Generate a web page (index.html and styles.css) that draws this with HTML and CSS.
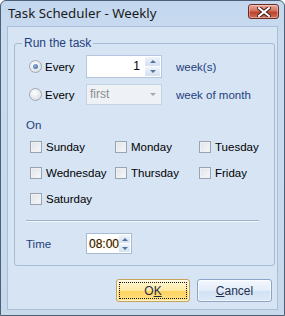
FILE: index.html
```html
<!DOCTYPE html>
<html lang="en">
<head>
  <meta charset="UTF-8">
  <title>Task Scheduler - Weekly</title>
  <link rel="stylesheet" href="styles.css">
</head>
<body>
  <div class="window">
    <!-- TITLE BAR -->
    <div class="titlebar">
      <span class="title">Task Scheduler - Weekly</span>
      <button class="close" type="button">
        <svg width="14" height="10" viewBox="0 0 14 10">
          <path d="M2 1 L12 9 M12 1 L2 9" stroke="#3b1d1a" stroke-width="4" stroke-linecap="square"/>
          <path d="M2 1 L12 9 M12 1 L2 9" stroke="#fff" stroke-width="2" stroke-linecap="square"/>
        </svg>
      </button>
    </div>

    <!-- CLIENT AREA -->
    <div class="client">
      <fieldset class="group">
        <legend>Run the task</legend>

        <div class="task-grid">
          <label class="radio-row"><span class="radio checked"></span>Every</label>
          <div class="spin">
            <span class="spin-value">1</span>
            <span class="spin-btns">
              <span class="spin-btn"><span class="arrow up"></span></span>
              <span class="spin-btn"><span class="arrow down"></span></span>
            </span>
          </div>
          <span class="blue unit">week(s)</span>

          <label class="radio-row"><span class="radio"></span>Every</label>
          <div class="combo disabled">
            <span class="combo-value">first</span>
            <span class="combo-arrow"><span class="arrow down grey"></span></span>
          </div>
          <span class="blue unit">week of month</span>
        </div>

        <div class="blue on-label">On</div>

        <div class="days">
          <label class="check-row"><span class="check"></span>Sunday</label>
          <label class="check-row"><span class="check"></span>Monday</label>
          <label class="check-row"><span class="check"></span>Tuesday</label>
          <label class="check-row"><span class="check"></span>Wednesday</label>
          <label class="check-row"><span class="check"></span>Thursday</label>
          <label class="check-row"><span class="check"></span>Friday</label>
          <label class="check-row"><span class="check"></span>Saturday</label>
        </div>

        <div class="separator"></div>

        <div class="time-row">
          <span class="blue time-label">Time</span>
          <div class="spin time">
            <span class="spin-value time-value">08:00</span>
            <span class="spin-btns">
              <span class="spin-btn"><span class="arrow up"></span></span>
              <span class="spin-btn"><span class="arrow down"></span></span>
            </span>
          </div>
        </div>
      </fieldset>

      <div class="buttons">
        <button class="btn default" type="button"><span class="focus">O<u>K</u></span></button>
        <button class="btn" type="button"><u>C</u>ancel</button>
      </div>
    </div>
  </div>
</body>
</html>
```

FILE: styles.css
```css
* {
  margin: 0;
  padding: 0;
  box-sizing: border-box;
}
body {
  background: #fff;
  font-family: "Liberation Sans", Arial, sans-serif;
  font-size: 11px;
  color: #000;
}

/* OKNO */
.window {
  width: 285px;
  height: 316px;
  display: flex;
  flex-direction: column;
  background: linear-gradient(#c3d7ef, #c9dbef 40px, #c8d9ec);
  border: 1px solid #4d5f75;
  border-radius: 6px 6px 0 0;
  padding: 0 6px 5px 6px;
}

/* PASEK TYTUŁU */
.titlebar {
  height: 25px;
  display: flex;
  align-items: flex-start;
  justify-content: space-between;
}
.title {
  font-family: "Noto Sans", "Liberation Sans", sans-serif;
  font-size: 13.3px;
  line-height: 15px;
  margin: 5px 0 0 1px;
  color: #1b1b1b;
}
.close {
  width: 31px;
  height: 15px;
  margin: 3px -1px 0 0;
  display: flex;
  align-items: center;
  justify-content: center;
  border: 1px solid #6b2a22;
  border-radius: 3px;
  background: linear-gradient(#e9a99c, #d5715f 45%, #c0412b 55%, #d0705c);
  box-shadow: inset 0 0 0 1px rgba(255, 255, 255, 0.35);
}

/* OBSZAR KLIENTA */
.client {
  flex: 1;
  display: flex;
  flex-direction: column;
  background: #d6e4f4;
  border: 1px solid #a9bfd9;
  padding: 0 5px 0 6px;
}

/* GRUPA */
.group {
  margin-top: 9px;
  height: 230px;
  border: 1px solid #a7bbd3;
  border-radius: 3px;
  padding: 0 15px 0 11px;
}
.group legend {
  margin-left: -4px;
  padding: 0 2px;
  font-size: 12px;
  line-height: 15px;
  color: #1f3f7c;
}
.blue {
  color: #1f3f7c;
}

/* RADIO + SPIN */
.task-grid {
  display: grid;
  grid-template-columns: 57px 76px auto;
  grid-template-rows: 23px 21px;
  row-gap: 6px;
  align-items: center;
  margin: 4px 0 0 3px;
  font-size: 11.5px;
}
.unit {
  margin-left: 14px;
  white-space: nowrap;
}
.radio-row,
.check-row {
  display: flex;
  align-items: center;
  gap: 3px;
}
.radio {
  width: 13px;
  height: 13px;
  border-radius: 50%;
  border: 1px solid #a0a8b4;
  background: radial-gradient(circle at 40% 35%, #ffffff, #dfe3e8 70%, #c9ced6);
  display: flex;
  align-items: center;
  justify-content: center;
}
.radio.checked::after {
  content: "";
  width: 5px;
  height: 5px;
  border-radius: 50%;
  background: radial-gradient(circle at 40% 35%, #8eb3db, #3c5f8f);
}

.spin,
.combo {
  height: 100%;
  display: flex;
  border: 1px solid #b4c6dd;
  background: #fff;
}
.spin-value {
  flex: 1;
  text-align: right;
  padding-right: 5px;
  font-size: 12px;
  line-height: 21px;
}
.spin-btns {
  width: 16px;
  display: flex;
  flex-direction: column;
  gap: 1px;
  padding: 1px 1px 1px 0;
}
.spin-btn {
  flex: 1;
  display: flex;
  align-items: center;
  justify-content: center;
  background: linear-gradient(#eef4fb, #d3e1f1);
}
.arrow {
  width: 0;
  height: 0;
  border-left: 3px solid transparent;
  border-right: 3px solid transparent;
}
.arrow.up {
  border-bottom: 3px solid #56739c;
}
.arrow.down {
  border-top: 3px solid #56739c;
}
.arrow.down.grey {
  border-top-color: #a7a7a7;
}

.combo.disabled {
  background: #eef2f7;
  border-color: #c6d3e3;
}
.combo-value {
  flex: 1;
  padding-left: 3px;
  font-size: 12px;
  line-height: 19px;
  color: #8c8c8c;
}
.combo-arrow {
  width: 17px;
  display: flex;
  align-items: center;
  justify-content: center;
}

.on-label {
  margin-top: 13px;
  line-height: 15px;
  font-size: 11.5px;
}

/* DNI TYGODNIA */
.days {
  display: grid;
  grid-template-columns: 85px 84px auto;
  grid-auto-rows: 26px;
  align-items: center;
  margin: 1px 0 0 4px;
  font-size: 11.5px;
}
.check-row {
  gap: 4px;
}
.check {
  width: 12px;
  height: 12px;
  border: 1px solid #9aa4b0;
  background: linear-gradient(135deg, #dfe3e8, #f7f8fa);
  box-shadow: inset 0 0 0 1px #eef0f3;
}

.separator {
  margin-top: 8px;
  height: 2px;
  border-top: 1px solid #a0b1c6;
  border-bottom: 1px solid #f2f6fb;
}

/* CZAS */
.time-row {
  display: flex;
  align-items: center;
  margin-top: 11px;
  font-size: 11.5px;
}
.time-label {
  width: 60px;
}
.spin.time {
  width: 46px;
  height: 21px;
  border-color: #a7bad3;
}
.time-value {
  text-align: left;
  padding: 0 0 0 2px;
  color: #1c1c1c;
  text-shadow: 0 0 1px #f1a33a;
}

/* PRZYCISKI */
.buttons {
  display: flex;
  justify-content: flex-end;
  gap: 7px;
  margin-top: 13px;
}
.btn {
  width: 75px;
  height: 23px;
  font-family: "Liberation Sans", Arial, sans-serif;
  font-size: 12px;
  color: #1d2f4d;
  border: 1px solid #8ba3c4;
  border-radius: 3px;
  background: linear-gradient(#f2f7fd, #e3edf9 50%, #d3e2f4 51%, #dbe8f7);
  box-shadow: inset 0 0 0 1px rgba(255, 255, 255, 0.6);
}
.btn.default {
  width: 74px;
  border-color: #c5a45a;
  background: linear-gradient(#fff8d9, #ffe9a5 50%, #ffd35a 51%, #ffe28c);
  padding: 2px;
}
.btn .focus {
  display: flex;
  align-items: center;
  justify-content: center;
  height: 100%;
  border: 1px dotted #1a1a1a;
}
```
